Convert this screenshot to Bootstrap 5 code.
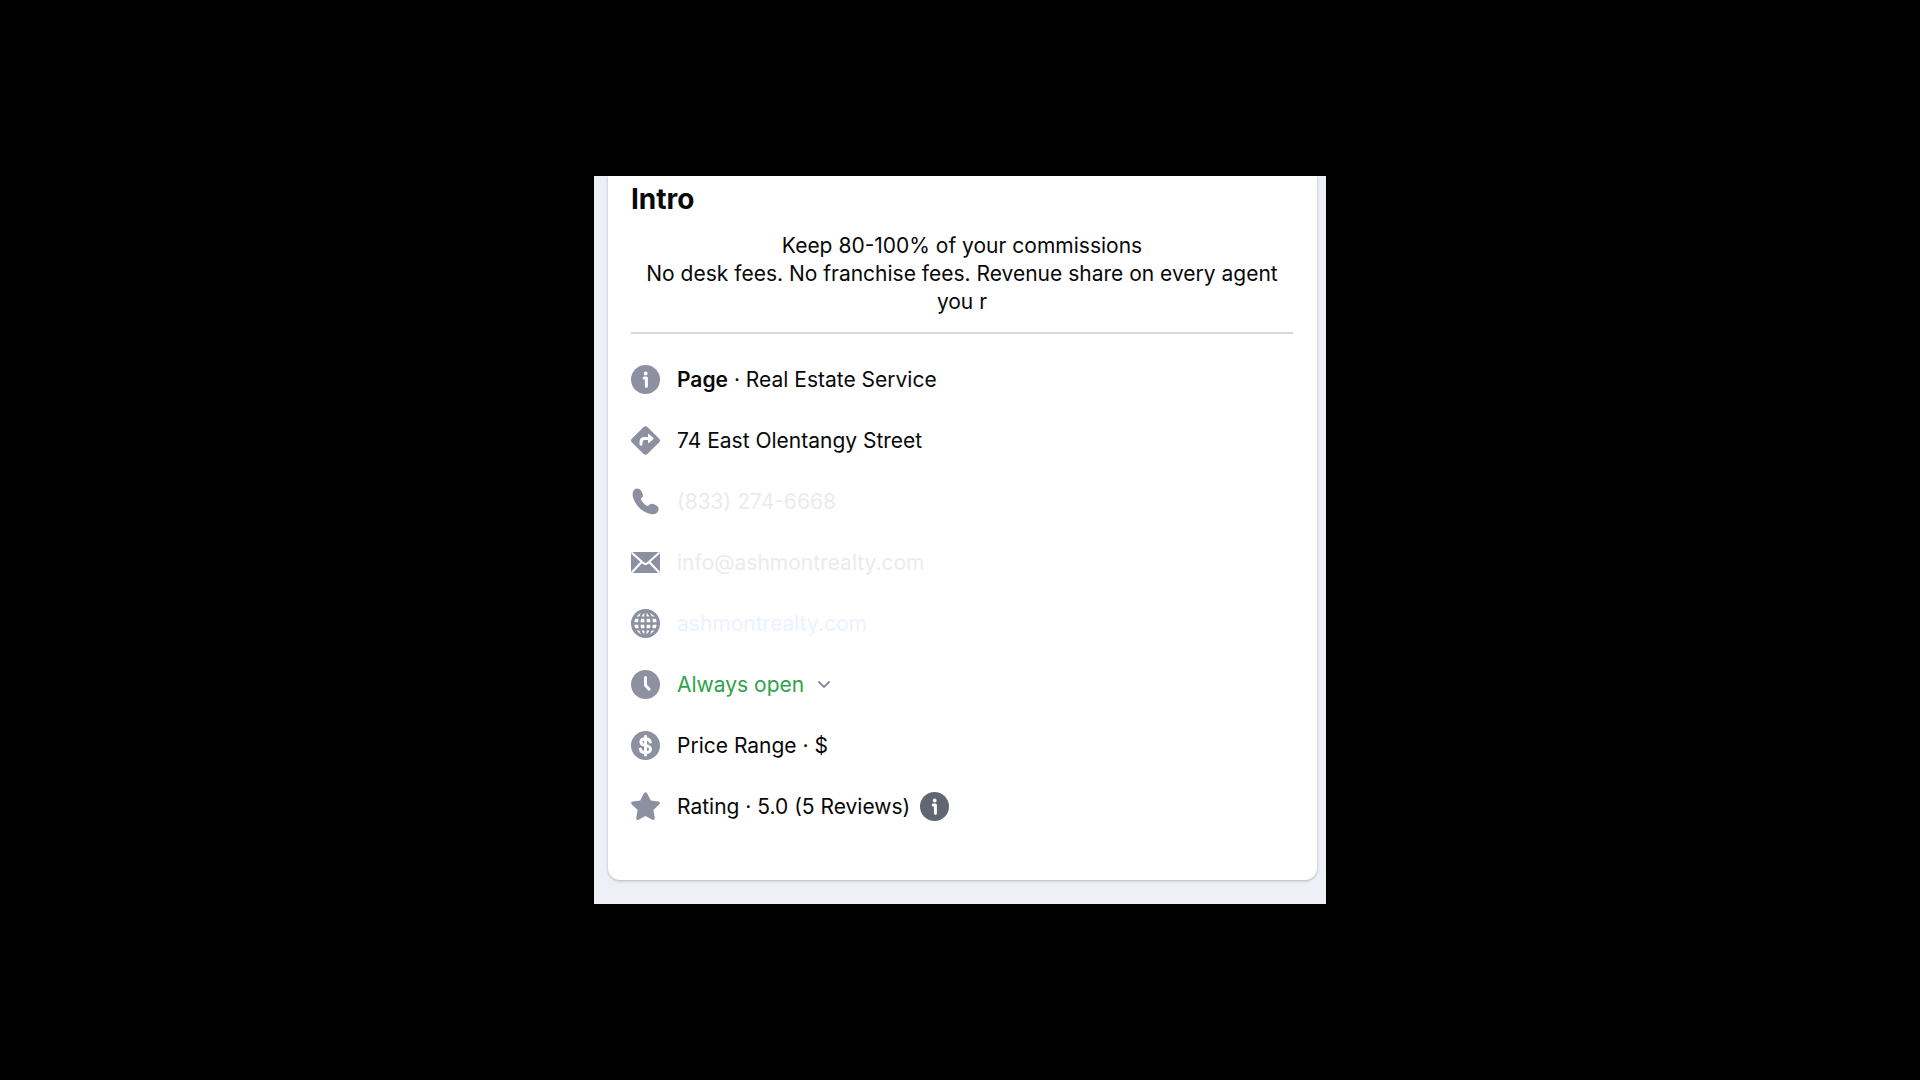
<!DOCTYPE html>
<html lang="en">
<head>
<meta charset="utf-8">
<meta name="viewport" content="width=device-width, initial-scale=1">
<title>Intro</title>
<link href="https://cdn.jsdelivr.net/npm/bootstrap@5.3.0/dist/css/bootstrap.min.css" rel="stylesheet">
<style>
  body { background: #000; font-family: Inter, "Liberation Sans", sans-serif; font-size: 21px; line-height: 28px; color: #080809; }
  .intro-panel { max-width: 732px; background: #eff0f5; padding: 0 9px 24px 14px; }
  .intro-card { border-radius: 0 0 12px 12px; padding: 7px 24px 59px 23px; box-shadow: 0 1px 3px rgba(0, 0, 0, .25); }
  .intro-title { font-size: 28px; line-height: 32px; margin-bottom: 17px; }
  .intro-rule { margin: 16px 0 31px; border-top: 2px solid #d5d7dc; opacity: 1; }
  .fact-list { gap: 32px; }
  .fact-row { gap: 17px; height: 29px; }
  .fact-icon { width: 29px; height: 29px; flex: none; fill: #8c90a1; display: block; }
  .fact-icon-dark { fill: #606770; }
  .fact-row a, .fact-row button { text-decoration: none; background: none; border: 0; padding: 0; }
  .faded { color: #ebebed; }
  .faded-link { color: #ebf2ff; }
  .hours { color: #31a24c; gap: 13px; }
  .rating { gap: 10px; }
</style>
</head>
<body class="min-vh-100 d-flex align-items-center justify-content-center">
<main class="intro-panel w-100 overflow-hidden">
  <section class="intro-card bg-white">
    <h1 class="intro-title fw-bold">Intro</h1>
    <p class="text-center mb-0">Keep 80-100% of your commissions<br>No desk fees. No franchise fees. Revenue share on every agent you r</p>
    <hr class="intro-rule">
    <ul class="fact-list list-unstyled d-flex flex-column mb-0">
      <li class="fact-row d-flex align-items-center">
        <svg class="fact-icon" viewBox="0 0 29 29" aria-hidden="true"><circle cx="14.500" cy="14.500" r="14.500"/><circle cx="14.700" cy="8.500" r="1.900" fill="#fff"/><path d="M13.200 13h2.200v8.200" fill="none" stroke="#fff" stroke-width="3" stroke-linecap="round" stroke-linejoin="round"/></svg>
        <span><strong class="fw-semibold">Page</strong> · Real Estate Service</span>
      </li>
      <li class="fact-row d-flex align-items-center">
        <svg class="fact-icon" viewBox="0 0 29 29" aria-hidden="true"><path d="M12.400 1.200a3 3 0 0 1 4.200 0L28 12.400a3 3 0 0 1 0 4.200L16.600 27.800a3 3 0 0 1-4.200 0L1 16.600a3 3 0 0 1 0-4.200Z"/><path d="M10 18.300v-2.100q0-3.700 3.700-3.700H18" fill="none" stroke="#fff" stroke-width="3" stroke-linecap="round"/><path d="M17 8.700q0-1.400 1.200-.5l4 3.600q.8.700 0 1.400l-4 3.600q-1.200.9-1.200-.5Z" fill="#fff"/></svg>
        <span>74 East Olentangy Street</span>
      </li>
      <li class="fact-row d-flex align-items-center">
        <svg class="fact-icon" viewBox="0 0 29 29" aria-hidden="true"><path d="M3.200 2.800Q5.800.6 8.400 2.100q2 1.200 3.200 4.700 1 2.300-.6 3.700l-.8.8q-.7.9.2 2.300 1.900 3 4.800 4.900 1.400.9 2.300.1l1-.8q1.500-1.400 3.700-.8 3.600 1 4.900 3.100 1.400 2.700-.8 5.300-2.700 2.600-7.100 1.600-6-1.400-11-6.300-4.900-5-6.300-10.900-1-4.300 1.300-7Z"/></svg>
        <a class="faded" href="tel:+18332746668">(833) 274-6668</a>
      </li>
      <li class="fact-row d-flex align-items-center">
        <svg class="fact-icon" viewBox="0 0 29 29" aria-hidden="true"><rect y="4" width="29" height="21" rx="2"/><path d="M.8 4.800 12.500 15.200q2 1.700 4 0L28.200 4.800M.8 24.500 10.200 14.500M28.200 24.500 18.800 14.500" fill="none" stroke="#fff" stroke-width="2.200"/></svg>
        <a class="faded" href="mailto:info@ashmontrealty.com">info@ashmontrealty.com</a>
      </li>
      <li class="fact-row d-flex align-items-center">
        <svg class="fact-icon" viewBox="0 0 29 29" aria-hidden="true"><circle cx="14.500" cy="14.500" r="14.500"/><circle cx="14.500" cy="14.500" r="11.200" fill="#fff"/><g fill="none" stroke="#8c90a1" stroke-width="2.300"><path d="M14.500 2v25M2 14.500h25M4 8.600h21M4 20.400h21"/><ellipse cx="14.500" cy="14.500" rx="6.200" ry="12"/></g></svg>
        <a class="faded-link" href="#">ashmontrealty.com</a>
      </li>
      <li class="fact-row d-flex align-items-center">
        <svg class="fact-icon" viewBox="0 0 29 29" aria-hidden="true"><circle cx="14.500" cy="14.500" r="14.500"/><path d="M14.500 7.500v7.700l3.600 4" fill="none" stroke="#fff" stroke-width="3" stroke-linecap="round" stroke-linejoin="round"/></svg>
        <button type="button" class="hours d-flex align-items-center">Always open
          <svg width="14" height="9" viewBox="0 0 14 9" aria-hidden="true"><path d="m2 2 5 5 5-5" fill="none" stroke="#8c90a1" stroke-width="2" stroke-linecap="round" stroke-linejoin="round"/></svg>
        </button>
      </li>
      <li class="fact-row d-flex align-items-center">
        <svg class="fact-icon" viewBox="0 0 29 29" aria-hidden="true"><circle cx="14.500" cy="14.500" r="14.500"/><path d="M19.300 11q-.8-3.300-4.800-3.300-4.600 0-4.600 3.200 0 2.600 4.600 3.500 5 .9 5 3.900 0 3.300-5 3.300-4.400 0-5.200-3.500M14.500 5.200v18.800" fill="none" stroke="#fff" stroke-width="3" stroke-linecap="round"/></svg>
        <span>Price Range · $</span>
      </li>
      <li class="fact-row d-flex align-items-center">
        <svg class="fact-icon" viewBox="0 0 29 29" aria-hidden="true"><path d="M12.900 1.200q1.600-2 3.200 0l3.700 7.300 7.700 1q2.300.8.900 2.700l-6 5.800 1.400 8q0 2.500-2.500 1.700l-6.800-3.600-6.800 3.600q-2.500.8-2.500-1.700l1.400-8-6-5.800q-1.400-1.900.9-2.700l7.700-1Z"/></svg>
        <span class="rating d-flex align-items-center">Rating · 5.0 (5 Reviews)
          <button type="button" aria-label="About ratings"><svg class="fact-icon fact-icon-dark" viewBox="0 0 29 29" aria-hidden="true"><circle cx="14.500" cy="14.500" r="14.500"/><circle cx="14.700" cy="8.500" r="1.900" fill="#fff"/><path d="M13.200 13h2.200v8.200" fill="none" stroke="#fff" stroke-width="3" stroke-linecap="round" stroke-linejoin="round"/></svg></button>
        </span>
      </li>
    </ul>
  </section>
</main>
<script src="https://cdn.jsdelivr.net/npm/bootstrap@5.3.0/dist/js/bootstrap.bundle.min.js"></script>
</body>
</html>
